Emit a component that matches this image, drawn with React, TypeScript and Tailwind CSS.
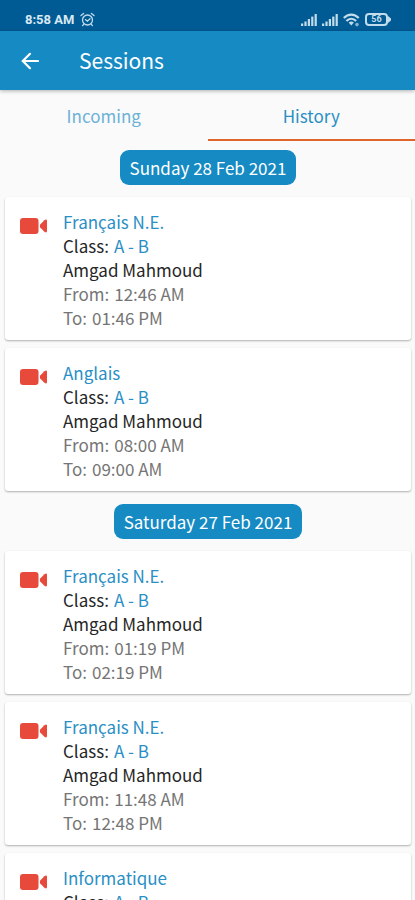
import React from 'react';

interface Session {
  subject: string;
  classes: string;
  teacher?: string;
  from?: string;
  to?: string;
}

interface SessionDay {
  date: string;
  sessions: Session[];
}

const days: SessionDay[] = [
  {
    date: 'Sunday 28 Feb 2021',
    sessions: [
      { subject: 'Français N.E.', classes: 'A - B', teacher: 'Amgad Mahmoud', from: '12:46 AM', to: '01:46 PM' },
      { subject: 'Anglais', classes: 'A - B', teacher: 'Amgad Mahmoud', from: '08:00 AM', to: '09:00 AM' },
    ],
  },
  {
    date: 'Saturday 27 Feb 2021',
    sessions: [
      { subject: 'Français N.E.', classes: 'A - B', teacher: 'Amgad Mahmoud', from: '01:19 PM', to: '02:19 PM' },
      { subject: 'Français N.E.', classes: 'A - B', teacher: 'Amgad Mahmoud', from: '11:48 AM', to: '12:48 PM' },
      { subject: 'Informatique', classes: 'A - B' },
    ],
  },
];

const AlarmIcon = () => (
  <svg className="w-[15px] h-[15px]" viewBox="0 0 15 15" fill="none" stroke="#c3dcec" strokeWidth="1.3" strokeLinecap="round">
    <circle cx="7.5" cy="8" r="5" />
    <path d="M1 3.6 3.6 1.4M14 3.6 11.4 1.4M3.6 12.4 2.6 13.6M11.4 12.4l1 1.2M5.4 7.6l2 1.6 2.6-2.4" />
  </svg>
);

const SignalIcon = () => (
  <svg className="w-4 h-3" viewBox="0 0 16 12" fill="#c3dcec">
    <rect x="0" y="9.5" width="2.2" height="2.5" />
    <rect x="3.4" y="7.5" width="2.2" height="4.5" />
    <rect x="6.8" y="5" width="2.2" height="7" />
    <rect x="10.2" y="2.6" width="2.2" height="9.4" />
    <rect x="13.6" y="0" width="2.2" height="12" />
  </svg>
);

const WifiIcon = () => (
  <svg className="w-[17px] h-[14px]" viewBox="0 0 17 14" fill="none" stroke="#c3dcec" strokeWidth="2.2">
    <path d="M.8 5C5 .4 11.5 .4 15.7 5" />
    <path d="M3.4 8C6.3 5 10.2 5 13.1 8" />
    <path d="M5.6 9.6Q8.25 7.4 10.9 9.6L8.25 12.6Z" fill="#c3dcec" stroke="none" />
    <circle cx="14" cy="11.6" r="1.8" fill="#86b3d0" stroke="none" />
  </svg>
);

const BatteryIcon = () => (
  <span className="flex items-center">
    <span className="flex h-[13px] w-[23px] items-center justify-center rounded-[4px] border-2 border-[#c3dcec] text-[9px] leading-none font-bold text-[#c3dcec]">
      56
    </span>
    <svg className="w-[3px] h-[7px]" viewBox="0 0 3 7" fill="#c3dcec">
      <path d="M0 0 3 2.5v2L0 7Z" />
    </svg>
  </span>
);

const BackIcon = () => (
  <svg className="w-[18px] h-[18px]" viewBox="0 0 18 18" fill="none" stroke="#fff" strokeWidth="2.2" strokeLinecap="round">
    <path d="M17 9H2M9 1.8 1.8 9 9 16.2" />
  </svg>
);

const VideoIcon = () => (
  <svg className="w-[27px] h-4 shrink-0" viewBox="0 0 27 16" fill="#e74a3b">
    <rect width="18.5" height="16" rx="3" />
    <path d="M20.2 6.4 24.4 2.2Q27 .6 27 3v10q0 2.400-2.600 .8L20.200 9.600Q19.400 8 20.200 6.400Z" />
  </svg>
);

const SessionCard: React.FC<{ session: Session }> = ({ session }) => (
  <li className="flex gap-4 rounded-[3px] bg-white pt-[13px] pb-[10px] pl-[15px] pr-4 shadow-[0_1px_2px_rgba(0,0,0,0.3)]">
    <div className="pt-2">
      <VideoIcon />
    </div>
    <div className="leading-6 text-[#757575]">
      <h2 className="text-[#2a8fc5]">{session.subject}</h2>
      <p className="flex gap-[5px] text-[#262626]">
        <span>Class:</span>
        <span className="text-[#2a8fc5]">{session.classes}</span>
      </p>
      {session.teacher && <p className="text-[#262626]">{session.teacher}</p>}
      {session.from && (
        <p className="flex gap-[5px]">
          <span>From:</span>
          <span>{session.from}</span>
        </p>
      )}
      {session.to && (
        <p className="flex gap-[5px]">
          <span>To:</span>
          <span>{session.to}</span>
        </p>
      )}
    </div>
  </li>
);

const App: React.FC = () => {
  return (
    <div className="h-screen overflow-hidden bg-[#fafafa] font-['Noto_Sans_CJK_SC','Noto_Sans',sans-serif] text-[17px]">
      {/* Status bar */}
      <div className="flex h-[31px] items-center justify-between bg-[#005b94] pt-2 pl-[25px] pr-6 font-[Roboto,sans-serif]">
        <div className="flex items-center gap-[6px] text-[13px] font-bold text-[#d9e9f3]">
          <span>8:58 AM</span>
          <AlarmIcon />
        </div>
        <div className="flex items-center gap-[5px]">
          <SignalIcon />
          <SignalIcon />
          <WifiIcon />
          <BatteryIcon />
        </div>
      </div>

      {/* App bar */}
      <header className="flex h-[59px] items-center gap-10 bg-[#168ac3] pl-[21px] text-white shadow-[0_1px_4px_rgba(0,0,0,0.3)]">
        <button type="button" aria-label="Back">
          <BackIcon />
        </button>
        <h1 className="text-[21px]">Sessions</h1>
      </header>

      {/* Tabs */}
      <div role="tablist" className="grid grid-cols-2 text-[#2a8fc5]">
        <button type="button" role="tab" aria-selected="false" className="h-[51px] border-b-2 border-transparent pt-[3px] text-[#6cb2d7]">
          Incoming
        </button>
        <button type="button" role="tab" aria-selected="true" className="h-[51px] border-b-2 border-[#e0652c] pt-[3px]">
          History
        </button>
      </div>

      {/* Sessions by day */}
      <main className="pl-[5px] pr-1">
        {days.map((day) => (
          <section key={day.date} className="flex flex-col pt-[9px] pb-1">
            <div className="self-center rounded-[9px] bg-[#168ac3] px-[10px] py-[5px] leading-[25px] text-white">
              {day.date}
            </div>
            <ul className="mt-3 flex flex-col gap-2">
              {day.sessions.map((session, index) => (
                <SessionCard key={index} session={session} />
              ))}
            </ul>
          </section>
        ))}
      </main>
    </div>
  );
};

export default App;
